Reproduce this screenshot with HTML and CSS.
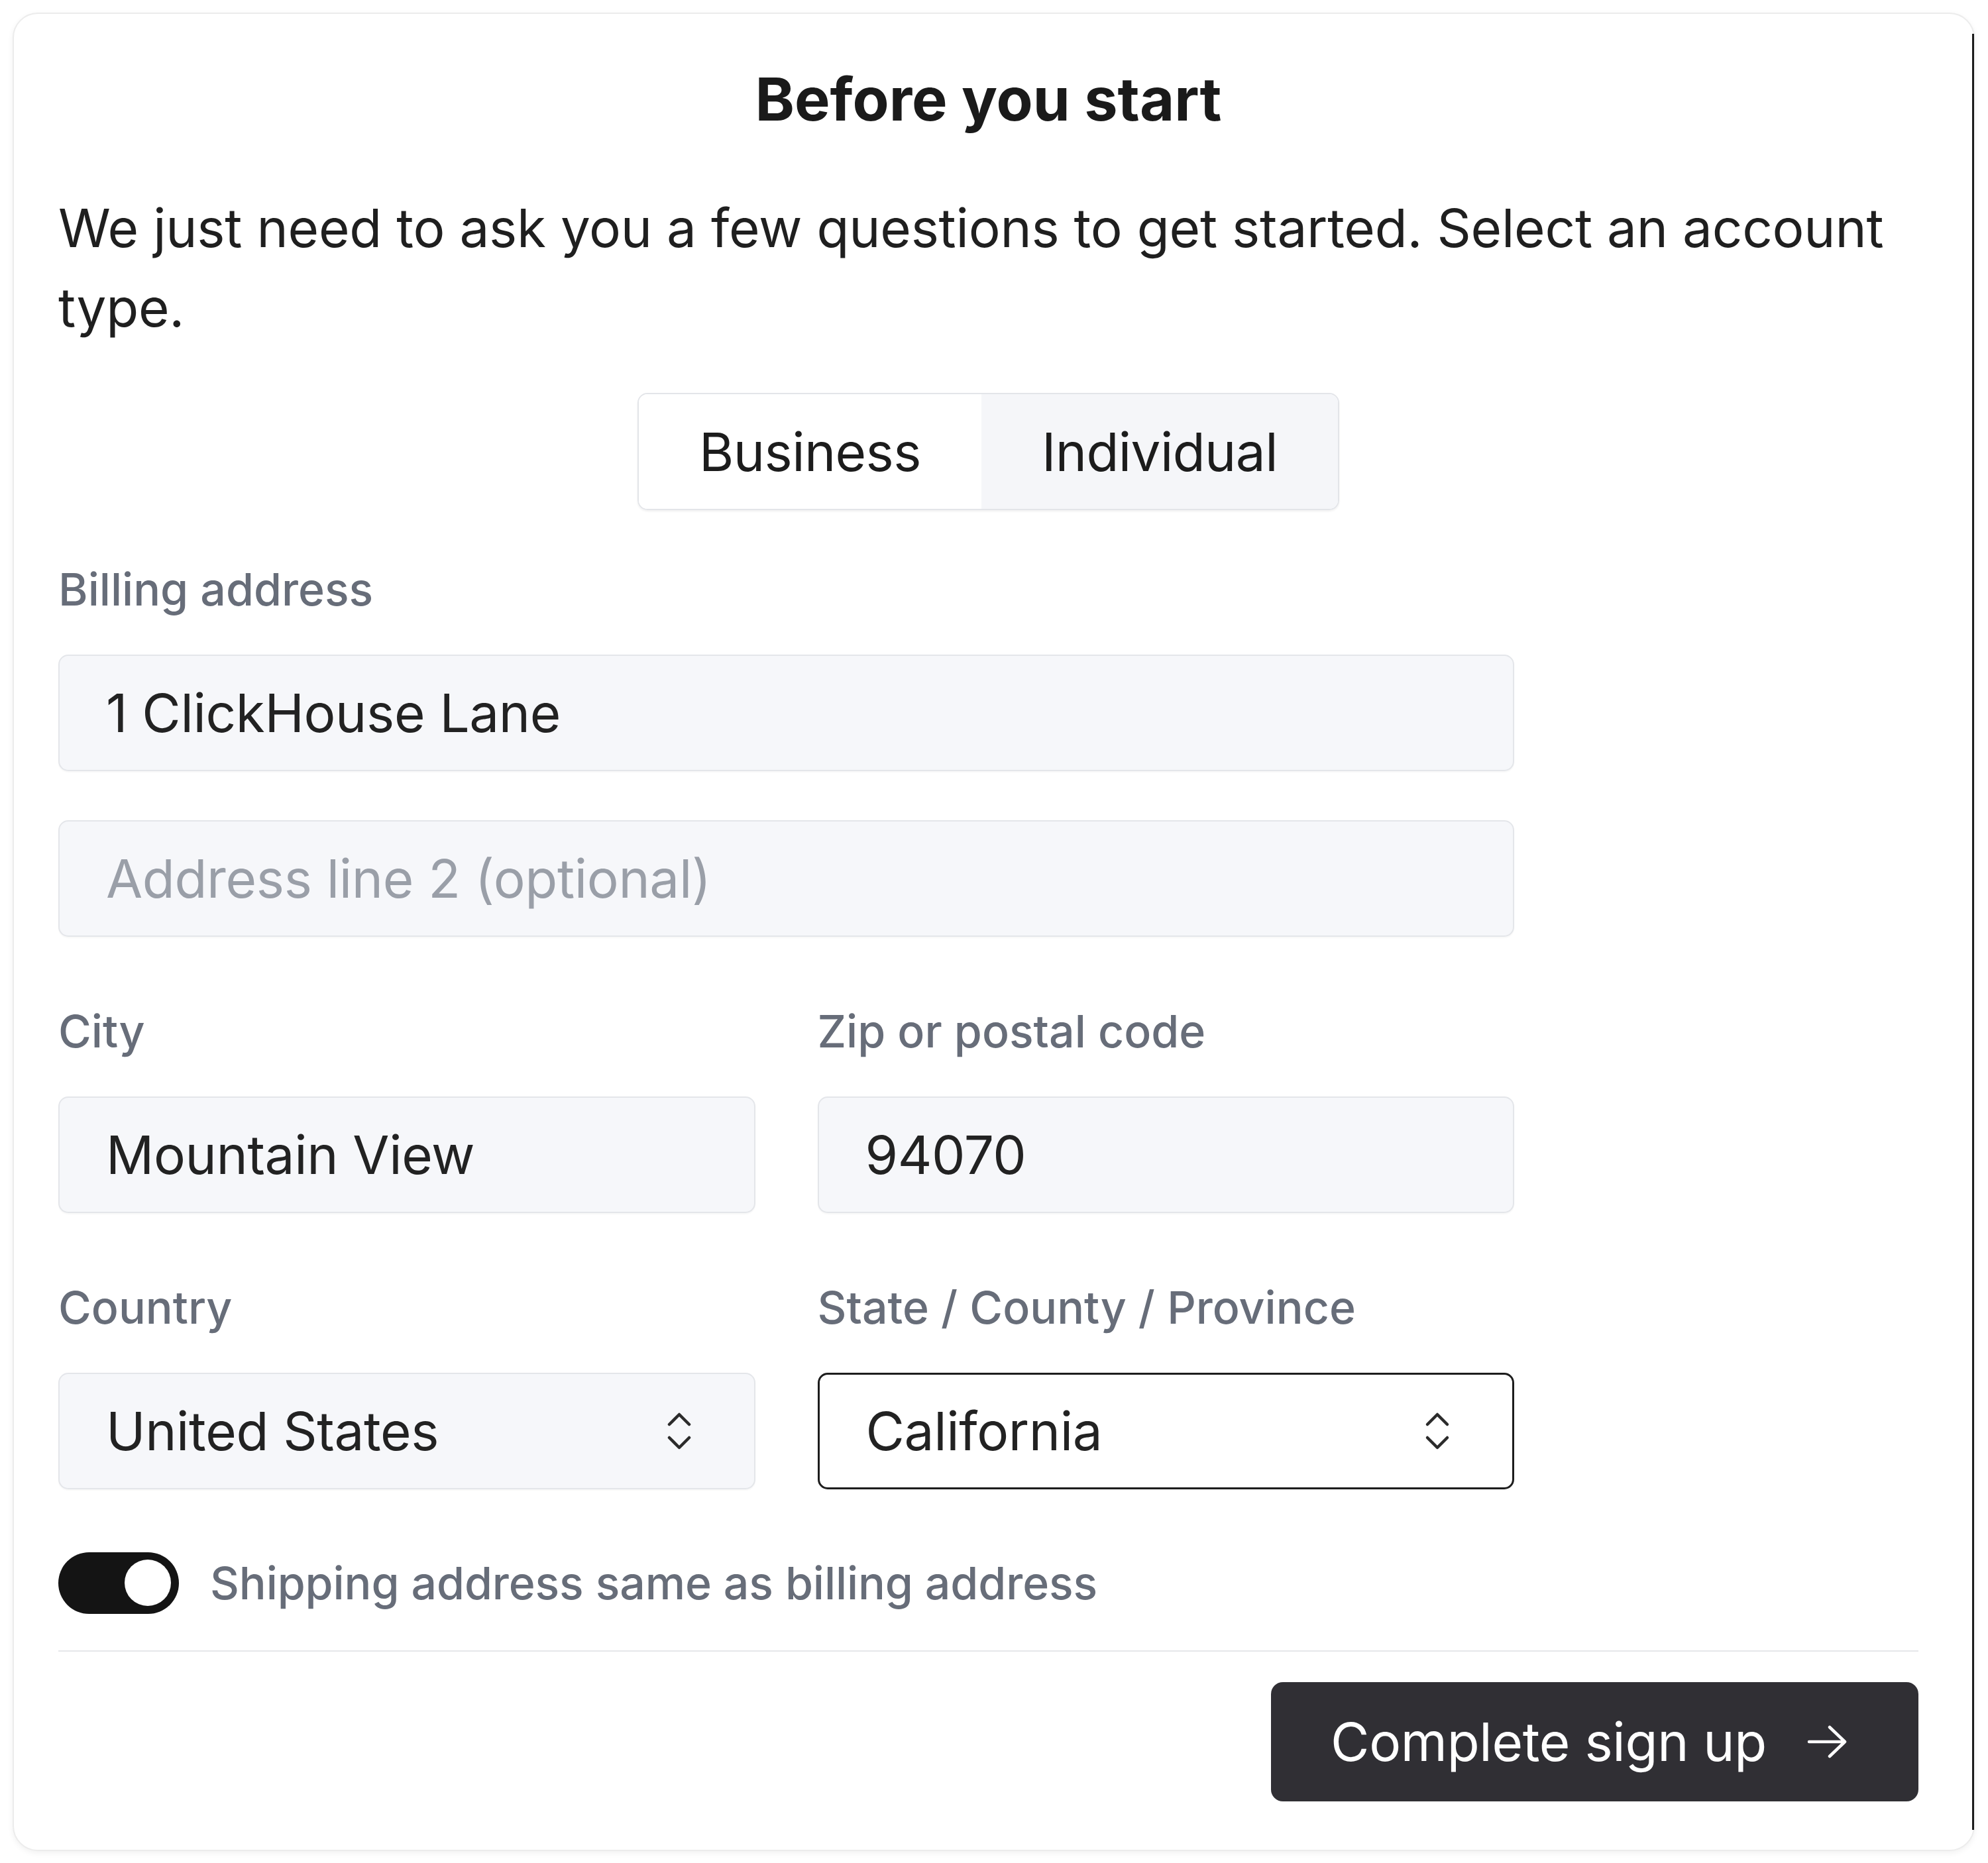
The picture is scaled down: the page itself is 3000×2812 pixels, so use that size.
FILE: index.html
```html
<!DOCTYPE html>
<html lang="en">
<head>
<meta charset="utf-8">
<title>Before you start</title>
<link rel="stylesheet" href="styles.css">
</head>
<body>
<div class="page">
  <div class="card">
    <h1 class="title">Before you start</h1>
    <p class="intro">We just need to ask you a few questions to get started. Select an account type.</p>
    <div class="segmented-wrap">
      <div class="segmented">
        <button class="seg seg-active">Business</button>
        <button class="seg">Individual</button>
      </div>
    </div>
    <div class="fields">
      <div class="field">
        <div class="label">Billing address</div>
        <div class="input">1 ClickHouse Lane</div>
        <div class="input input-second placeholder">Address line 2 (optional)</div>
      </div>
      <div class="row">
        <div class="field">
          <div class="label">City</div>
          <div class="input">Mountain View</div>
        </div>
        <div class="field">
          <div class="label">Zip or postal code</div>
          <div class="input">94070</div>
        </div>
      </div>
      <div class="row">
        <div class="field">
          <div class="label">Country</div>
          <div class="input select">
            <span>United States</span>
            <svg class="chev" width="40" height="60" viewBox="0 0 40 60"><path d="M5 20 L20 5 L35 20 M5 40 L20 55 L35 40" fill="none" stroke="#2b2b2b" stroke-width="4.5" stroke-linecap="round" stroke-linejoin="round"/></svg>
          </div>
        </div>
        <div class="field">
          <div class="label">State / County / Province</div>
          <div class="input select select-focus">
            <span>California</span>
            <svg class="chev" width="40" height="60" viewBox="0 0 40 60"><path d="M5 20 L20 5 L35 20 M5 40 L20 55 L35 40" fill="none" stroke="#2b2b2b" stroke-width="4.5" stroke-linecap="round" stroke-linejoin="round"/></svg>
          </div>
        </div>
      </div>
    </div>
    <div class="toggle-row">
      <div class="toggle"><div class="knob"></div></div>
      <span class="toggle-label">Shipping address same as billing address</span>
    </div>
    <div class="divider"></div>
    <div class="actions">
      <button class="primary">
        <span>Complete sign up</span>
        <svg width="60" height="50" viewBox="0 0 60 50"><path d="M3 25 H57 M34 3 L57 25 L34 47" fill="none" stroke="#ffffff" stroke-width="4.5" stroke-linecap="round" stroke-linejoin="round"/></svg>
      </button>
    </div>
  </div>
</div>
</body>
</html>
```

FILE: styles.css
```css
* { box-sizing: border-box; }
html, body { margin: 0; padding: 0; background: #ffffff; }
body { font-family: Inter, "Noto Sans", sans-serif; color: #1f1f1f; }

.page { padding: 19px 20px 19px 19px; }

.card {
  position: relative;
  background: #ffffff;
  border: 2px solid #ececec;
  border-radius: 38px;
  box-shadow: 0 3px 10px rgba(0,0,0,0.06);
  padding: 69px 83px 73px 67px;
}
.card::after {
  content: "";
  position: absolute;
  right: -1px;
  top: 30px;
  bottom: 30px;
  width: 3px;
  background: #1c1c1c;
}

.title {
  margin: 0;
  text-align: center;
  font-size: 90px;
  line-height: 120px;
  font-weight: 700;
  color: #1a1a1a;
}

.intro {
  margin: 74px 0 0 0;
  font-size: 80px;
  line-height: 120px;
  font-weight: 400;
  letter-spacing: -0.25px;
  color: #1f1f1f;
}

.segmented-wrap { display: flex; justify-content: center; margin-top: 69px; }
.segmented {
  display: flex;
  border: 2px solid #e3e5e9;
  border-radius: 15px;
  overflow: hidden;
  box-shadow: 0 2px 3px rgba(0,0,0,0.06);
}
.seg {
  height: 173px;
  padding: 0 91px;
  border: 0;
  margin: 0;
  background: #f5f6f9;
  font-family: Inter, sans-serif;
  font-size: 80px;
  line-height: 120px;
  letter-spacing: -0.6px;
  color: #1c1c1c;
  display: flex;
  align-items: center;
}
.seg-active { background: #ffffff; }

.fields { width: 2197px; margin-top: 69px; }
.row { display: grid; grid-template-columns: 1fr 1fr; column-gap: 94px; margin-top: 92px; }

.label {
  font-size: 68px;
  line-height: 100px;
  font-weight: 500;
  color: #676d79;
  margin-bottom: 49px;
}

.input {
  height: 176px;
  border: 2px solid #e4e6ea;
  border-radius: 15px;
  background: #f6f7fa;
  box-shadow: 0 2px 2px rgba(0,0,0,0.03);
  padding: 0 70px;
  display: flex;
  align-items: center;
  font-size: 80px;
  line-height: 120px;
  letter-spacing: -0.35px;
  color: #222222;
}
.input-second { margin-top: 74px; }
.placeholder { color: #9a9fa8; }

.select { justify-content: space-between; padding-right: 93px; }
.select-focus { background: #ffffff; border: 3px solid #1d1d1d; }
.chev { display: block; flex: none; }

.toggle-row { display: flex; align-items: center; margin-top: 91px; }
.toggle {
  width: 182px;
  height: 93px;
  border-radius: 47px;
  background: #141414;
  display: flex;
  justify-content: flex-end;
  align-items: center;
  padding-right: 12px;
  flex: none;
}
.knob { width: 70px; height: 70px; border-radius: 50%; background: #ffffff; }
.toggle-label {
  margin-left: 47px;
  font-size: 68px;
  line-height: 100px;
  font-weight: 500;
  letter-spacing: -0.1px;
  color: #676d79;
}

.divider { height: 2px; background: #e6e7ea; margin-top: 52px; }

.actions { display: flex; justify-content: flex-end; margin-top: 46px; }
.primary {
  height: 180px;
  padding: 0 108px 0 90px;
  border: 0;
  border-radius: 18px;
  background: #302f34;
  color: #ffffff;
  font-family: Inter, sans-serif;
  font-size: 80px;
  line-height: 120px;
  letter-spacing: -0.3px;
  display: flex;
  align-items: center;
  gap: 61px;
}
.primary svg { display: block; }
```
